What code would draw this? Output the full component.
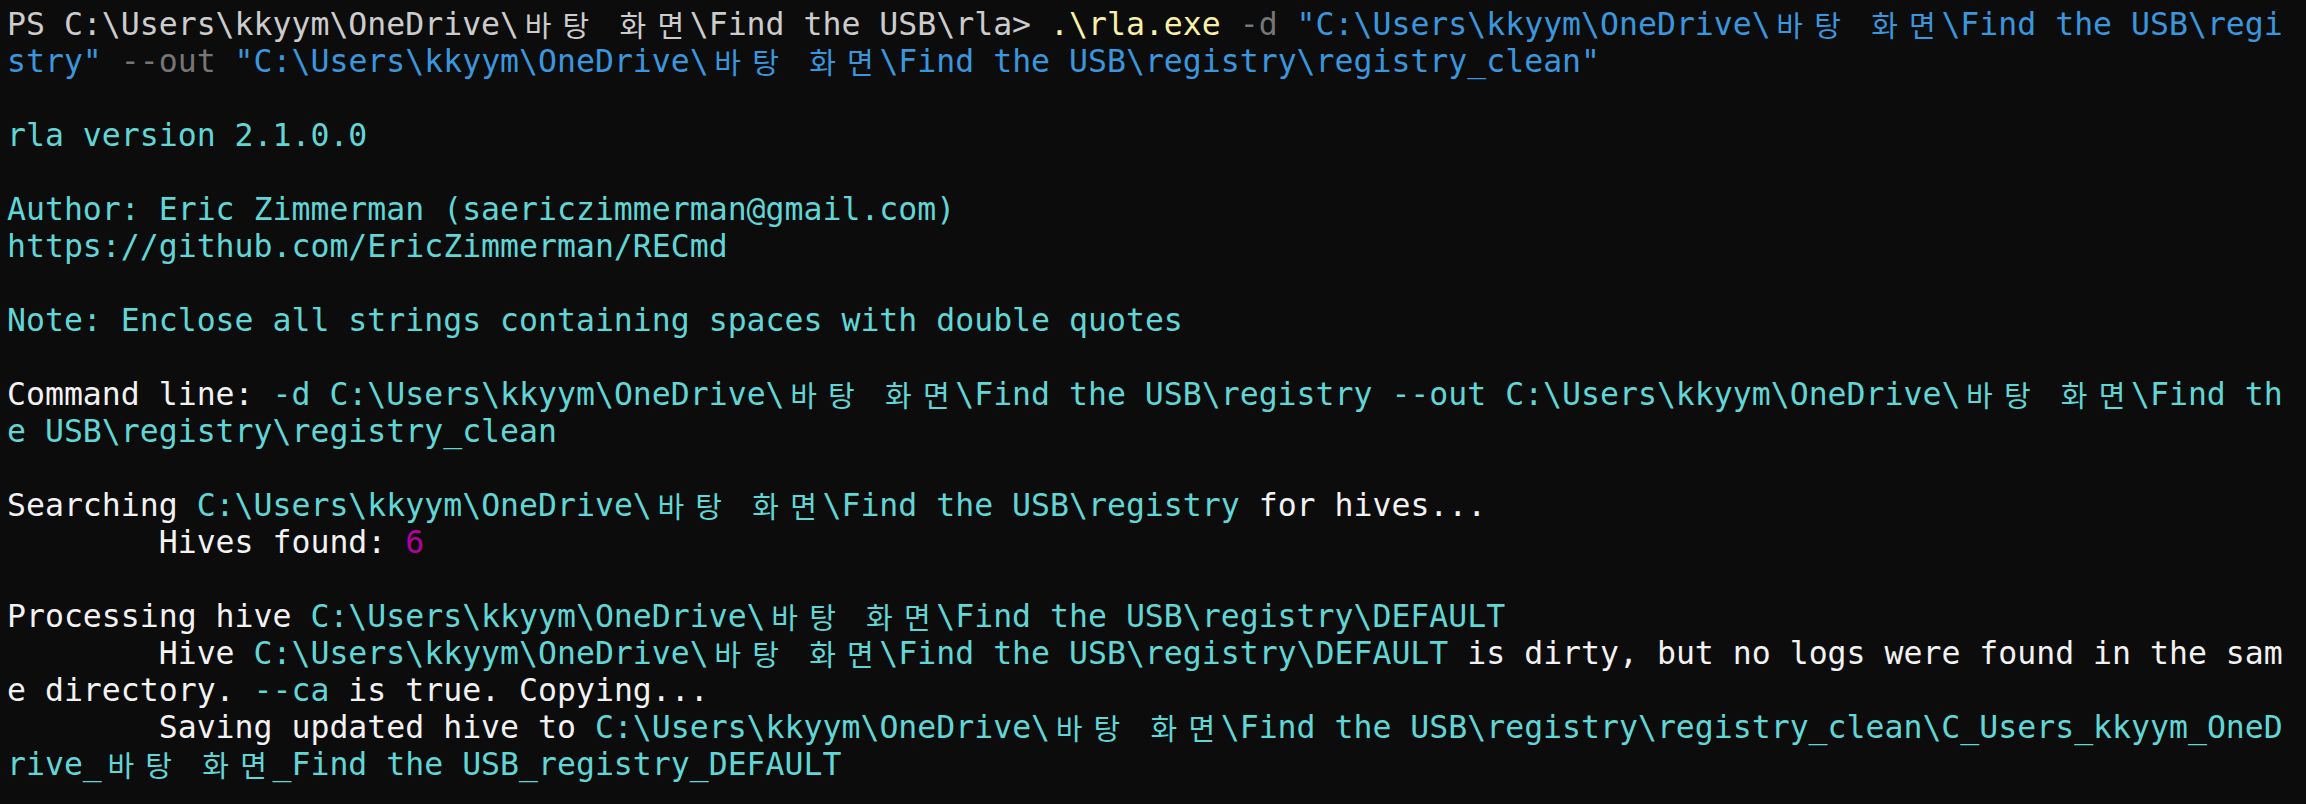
import React from "react";

type Seg = [string, string];

const W = "text-[#f2f2f2]";
const P = "text-[#cccccc]";
const C = "text-[#61d6d6]";
const B = "text-[#3a96dd]";
const Y = "text-[#f9f1a5]";
const G = "text-[#767676]";
const M = "text-[#b4009e]";

const isWide = (ch: string) => /[\u1100-\u11ff\u3130-\u318f\uac00-\ud7af]/.test(ch);

function Text({ s }: { s: string }) {
  const parts: React.ReactNode[] = [];
  let buf = "";
  let k = 0;
  for (const ch of s) {
    if (isWide(ch)) {
      if (buf) parts.push(<span key={k++}>{buf}</span>);
      buf = "";
      parts.push(
        <span
          key={k++}
          className="inline-block w-[37.93px] text-center font-['Noto_Sans_CJK_KR',sans-serif] text-[29px] leading-[37px] align-top"
        >
          {ch}
        </span>
      );
    } else buf += ch;
  }
  if (buf) parts.push(<span key={k++}>{buf}</span>);
  return <>{parts}</>;
}

const U = "C:\\Users\\kkyym\\OneDrive\\바탕 화면\\Find the USB";

const lines: Seg[][] = [
  [
    [P, `PS ${U}\\rla> `],
    [Y, ".\\rla.exe"],
    [G, " -d"],
    [B, ` "${U}\\regi`],
  ],
  [
    [B, 'stry"'],
    [G, " --out"],
    [B, ` "${U}\\registry\\registry_clean"`],
  ],
  [],
  [[C, "rla version 2.1.0.0"]],
  [],
  [[C, "Author: Eric Zimmerman (saericzimmerman@gmail.com)"]],
  [[C, "https://github.com/EricZimmerman/RECmd"]],
  [],
  [[C, "Note: Enclose all strings containing spaces with double quotes"]],
  [],
  [
    [W, "Command line: "],
    [C, `-d ${U}\\registry --out C:\\Users\\kkyym\\OneDrive\\바탕 화면\\Find th`],
  ],
  [[C, "e USB\\registry\\registry_clean"]],
  [],
  [
    [W, "Searching "],
    [C, `${U}\\registry`],
    [W, " for hives..."],
  ],
  [
    [W, "        Hives found: "],
    [M, "6"],
  ],
  [],
  [
    [W, "Processing hive "],
    [C, `${U}\\registry\\DEFAULT`],
  ],
  [
    [W, "        Hive "],
    [C, `${U}\\registry\\DEFAULT`],
    [W, " is dirty, but no logs were found in the sam"],
  ],
  [
    [W, "e directory. "],
    [C, "--ca"],
    [W, " is true. Copying..."],
  ],
  [
    [W, "        Saving updated hive to "],
    [C, `${U}\\registry\\registry_clean\\C_Users_kkyym_OneD`],
  ],
  [[C, "rive_바탕 화면_Find the USB_registry_DEFAULT"]],
];

export default function App() {
  return (
    <div className="w-[2306px] h-[804px] overflow-hidden bg-[#0c0c0c] pl-[7px] pt-[6px] font-['DejaVu_Sans_Mono',monospace] text-[31.5px] leading-[37px]">
      {lines.map((segs, i) => (
        <div key={i} className="h-[37px] whitespace-pre">
          {segs.map(([cls, s], j) => (
            <span key={j} className={cls}>
              <Text s={s} />
            </span>
          ))}
        </div>
      ))}
    </div>
  );
}
